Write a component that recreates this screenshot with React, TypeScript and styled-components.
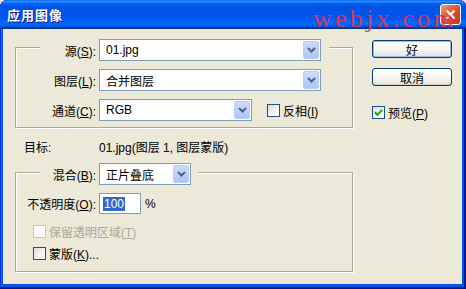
import React from "react";
import styled, { createGlobalStyle } from "styled-components";

const GlobalStyle = createGlobalStyle`
  html, body {
    margin: 0;
    padding: 0;
    background: #ECE9D8;
  }
  body {
    font-family: "Liberation Sans", "Noto Sans CJK SC", sans-serif;
    font-size: 12px;
    color: #000;
  }
`;

const Window = styled.div`
  position: relative;
  width: 466px;
  height: 289px;
  box-sizing: border-box;
  display: flex;
  flex-direction: column;
  padding: 0 4px 5px 3px;
  background: #0055E5;
  border-radius: 7px 7px 0 0;
  overflow: hidden;
  box-shadow: inset -1px -1px #00138c, inset 1px 1px #0831d9, inset -2px -2px #001ea0, inset 2px 2px #166aee;
`;

const TitleBar = styled.div`
  height: 29px;
  flex: none;
  margin: 0 -4px 0 -3px;
  display: flex;
  align-items: center;
  justify-content: space-between;
  padding: 0 5px 0 7px;
  background: linear-gradient(to bottom, #0058EE 0%, #3593FF 4%, #288EFF 6%, #127DFF 8%, #036FFC 10%, #0262EE 14%, #0057E5 20%, #0054E3 24%, #0055EB 56%, #005BF5 66%, #026AFE 76%, #0062EF 86%, #0052D6 92%, #0040AB 94%, #003092 100%);
`;

const Title = styled.span`
  color: #fff;
  font-weight: bold;
  font-size: 13px;
  letter-spacing: 1px;
  text-shadow: 1px 1px 0 #0A1883;
`;

const CloseButton = styled.div`
  width: 21px;
  height: 21px;
  box-sizing: border-box;
  border: 1px solid #fff;
  border-radius: 3px;
  display: flex;
  align-items: center;
  justify-content: center;
  background: linear-gradient(135deg, #F4A68E 0%, #E36B4A 30%, #D04A2A 65%, #B93C20 100%);
`;

const Watermark = styled.div`
  position: absolute;
  left: 313px;
  top: 6px;
  font-family: "Liberation Serif", serif;
  font-size: 26px;
  line-height: 26px;
  letter-spacing: 3.2px;
  color: #E8344F;
  opacity: 0.9;
`;

const Client = styled.div`
  flex: 1;
  display: flex;
  align-items: flex-start;
  padding: 11px 0 0 12px;
  background: #ECE9D8;
`;

const LeftColumn = styled.div`
  width: 339px;
  margin-top: 7px;
  display: flex;
  flex-direction: column;
`;

const GroupBox = styled.div<{ $gap: number; $pb: number; $mt?: number }>`
  width: 338px;
  box-sizing: border-box;
  margin-top: ${p => p.$mt ?? 0}px;
  display: flex;
  flex-direction: column;
  gap: ${p => p.$gap}px;
  padding-bottom: ${p => p.$pb}px;
  border: 1px solid #ACA899;
  box-shadow: 1px 1px 0 #fff, inset 1px 1px 0 #fff;
`;

const FieldRow = styled.div<{ $legend?: boolean; $pr?: number; $mt?: number; $h?: number }>`
  display: flex;
  align-items: center;
  gap: 3px;
  height: ${p => p.$h ?? 22}px;
  margin-top: ${p => p.$mt ?? 0}px;
  ${p => p.$legend && `
    align-self: flex-start;
    margin-left: 24px;
    padding-right: ${p.$pr ?? 8}px;
    background: #ECE9D8;
  `}
`;

const FieldLabel = styled.label<{ $w: number }>`
  width: ${p => p.$w}px;
  text-align: right;
  white-space: nowrap;
`;

const Combo = styled.div<{ $w: number }>`
  width: ${p => p.$w}px;
  height: 22px;
  box-sizing: border-box;
  padding: 1px;
  display: flex;
  align-items: stretch;
  border: 1px solid #7F9DB9;
  background: #fff;
`;

const ComboValue = styled.span`
  flex: 1;
  display: flex;
  align-items: center;
  padding-left: 5px;
  white-space: nowrap;
`;

const DropButton = styled.span`
  width: 16px;
  box-sizing: border-box;
  display: flex;
  align-items: center;
  justify-content: center;
  border-radius: 2px;
  border: 1px solid #BACEF8;
  background: linear-gradient(to bottom, #CCDBFD 0%, #BDD0FA 50%, #AFC5F6 100%);
`;

const OpacityInput = styled.div`
  width: 42px;
  height: 21px;
  box-sizing: border-box;
  display: flex;
  align-items: center;
  padding-left: 3px;
  border: 1px solid #7F9DB9;
  background: #fff;
`;

const Selection = styled.span`
  background: #316AC5;
  color: #fff;
  line-height: 14px;
  padding: 0 1px;
`;

const PercentSign = styled.span`
  margin-left: 1px;
`;

const TargetRow = styled.div`
  display: flex;
  align-items: center;
  height: 16px;
  margin-top: 10px;
  padding-left: 9px;
`;

const TargetLabel = styled.span`
  width: 75px;
`;

const CheckRow = styled.div<{ $pl?: number; $mt?: number; $disabled?: boolean }>`
  display: flex;
  align-items: center;
  gap: 3px;
  height: 16px;
  padding-left: ${p => p.$pl ?? 0}px;
  margin-top: ${p => p.$mt ?? 0}px;
  color: ${p => (p.$disabled ? "#ACA899" : "#000")};
  white-space: nowrap;
`;

const CheckBox = styled.span<{ $disabled?: boolean }>`
  width: 13px;
  height: 13px;
  box-sizing: border-box;
  display: flex;
  align-items: center;
  justify-content: center;
  border: 1px solid ${p => (p.$disabled ? "#CAC8BB" : "#1C5180")};
  background: ${p => (p.$disabled ? "#fff" : "linear-gradient(135deg, #DCDBD5 0%, #F6F6F3 60%, #fff 100%)")};
`;

const RightColumn = styled.div`
  margin-left: 18px;
  display: flex;
  flex-direction: column;
  gap: 10px;
`;

const PushButton = styled.div<{ $default?: boolean }>`
  width: 80px;
  height: 18px;
  box-sizing: border-box;
  display: flex;
  align-items: center;
  justify-content: center;
  border: 1px solid #003C74;
  border-radius: 3px;
  background: linear-gradient(to bottom, #FFFFFF 0%, #F4F4F0 60%, #E4E1D8 100%);
  box-shadow: ${p => (p.$default ? "inset 0 0 0 1px #9DB9EB" : "inset 0 -1px 0 #D6D0C5")};
`;

const Chevron = () => (
  <svg width="9" height="6" viewBox="0 0 9 6">
    <path d="M1 1 L4.5 4.5 L8 1" stroke="#4D6185" strokeWidth="2" fill="none" />
  </svg>
);

const Check = () => (
  <svg width="9" height="9" viewBox="0 0 9 9">
    <path d="M1 4.2 L3.5 6.8 L8 1.8" stroke="#21A121" strokeWidth="2" fill="none" />
  </svg>
);

const ComboBox = ({ width, value }: { width: number; value: string }) => (
  <Combo $w={width}>
    <ComboValue>{value}</ComboValue>
    <DropButton>
      <Chevron />
    </DropButton>
  </Combo>
);

export default function App() {
  return (
    <>
      <GlobalStyle />
      <Window>
        <TitleBar>
          <Title>应用图像</Title>
          <CloseButton>
            <svg width="11" height="11" viewBox="0 0 11 11">
              <path d="M1.5 1.5 L9.5 9.5 M9.5 1.5 L1.5 9.5" stroke="#fff" strokeWidth="2.2" fill="none" />
            </svg>
          </CloseButton>
        </TitleBar>
        <Watermark>webjx.com</Watermark>
        <Client>
          <LeftColumn>
            <GroupBox $gap={8} $pb={6}>
              <FieldRow $legend $pr={8} $mt={-9}>
                <FieldLabel $w={56}>源(<u>S</u>):</FieldLabel>
                <ComboBox width={222} value="01.jpg" />
              </FieldRow>
              <FieldRow>
                <FieldLabel $w={80}>图层(<u>L</u>):</FieldLabel>
                <ComboBox width={222} value="合并图层" />
              </FieldRow>
              <FieldRow>
                <FieldLabel $w={80}>通道(<u>C</u>):</FieldLabel>
                <ComboBox width={153} value="RGB" />
                <CheckRow $pl={12}>
                  <CheckBox />
                  <span>反相(<u>I</u>)</span>
                </CheckRow>
              </FieldRow>
            </GroupBox>

            <TargetRow>
              <TargetLabel>目标:</TargetLabel>
              <span>01.jpg(图层 1, 图层蒙版)</span>
            </TargetRow>

            <GroupBox $gap={0} $pb={10} $mt={18}>
              <FieldRow $legend $pr={7} $mt={-10}>
                <FieldLabel $w={56}>混合(<u>B</u>):</FieldLabel>
                <ComboBox width={92} value="正片叠底" />
              </FieldRow>
              <FieldRow $mt={8} $h={21}>
                <FieldLabel $w={80}>不透明度(<u>O</u>):</FieldLabel>
                <OpacityInput>
                  <Selection>100</Selection>
                </OpacityInput>
                <PercentSign>%</PercentSign>
              </FieldRow>
              <CheckRow $pl={17} $mt={9} $disabled>
                <CheckBox $disabled />
                <span>保留透明区域(<u>T</u>)</span>
              </CheckRow>
              <CheckRow $pl={17} $mt={6}>
                <CheckBox />
                <span>蒙版(<u>K</u>)...</span>
              </CheckRow>
            </GroupBox>
          </LeftColumn>

          <RightColumn>
            <PushButton $default>好</PushButton>
            <PushButton>取消</PushButton>
            <CheckRow $mt={8}>
              <CheckBox>
                <Check />
              </CheckBox>
              <span>预览(<u>P</u>)</span>
            </CheckRow>
          </RightColumn>
        </Client>
      </Window>
    </>
  );
}
